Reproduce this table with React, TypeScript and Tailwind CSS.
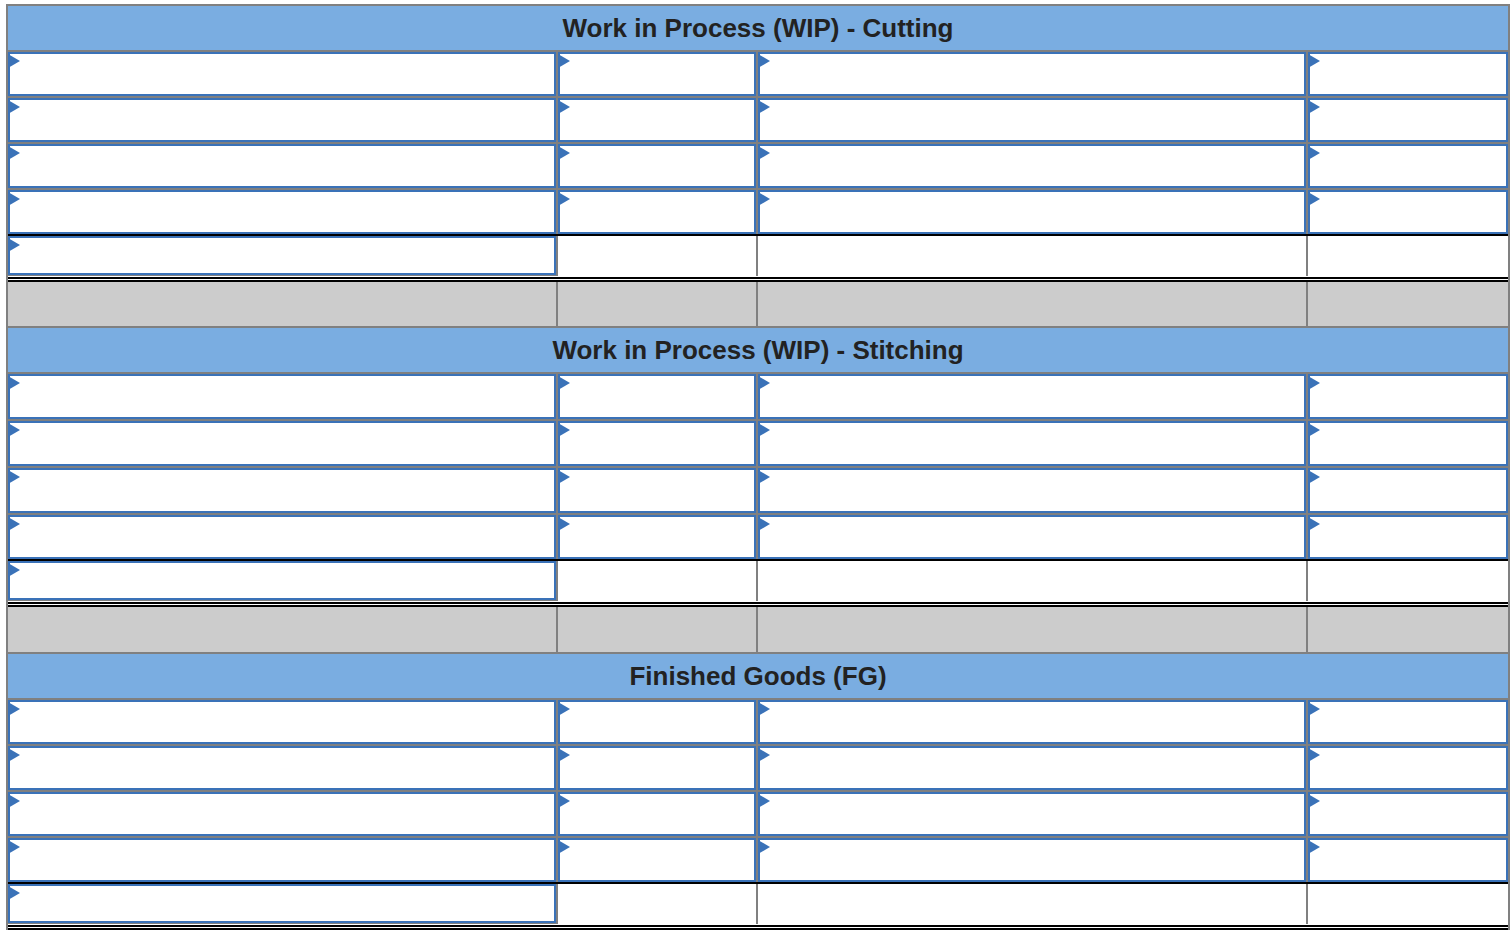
import React from "react";

const COLS = "grid grid-cols-[548px_198px_548px_1fr] gap-x-[2px] bg-[#808080]";

function InputCell() {
  return (
    <div className="relative h-full border-2 border-[#3a72b8] bg-white">
      <svg
        className="absolute left-[-2px] top-0"
        width="13"
        height="15"
        viewBox="0 0 13 15"
      >
        <polygon points="0,0 12,7 0,14" fill="#3a72b8" />
      </svg>
    </div>
  );
}

function InputRow({ h }: { h: string }) {
  return (
    <div className={`${COLS} ${h}`}>
      <InputCell />
      <InputCell />
      <InputCell />
      <InputCell />
    </div>
  );
}

function Gap() {
  return <div className="h-[2px] bg-[#808080]" />;
}

function Section({
  title,
  heights,
  grayH,
  showGray,
}: {
  title: string;
  heights: string[];
  grayH: string;
  showGray: boolean;
}) {
  return (
    <div className="flex flex-col">
      <div className="flex h-[44px] items-center justify-center bg-[#7aade1] text-[26px] font-bold text-[#222222]">
        {title}
      </div>
      <Gap />
      <InputRow h={heights[0]} />
      <Gap />
      <InputRow h={heights[1]} />
      <Gap />
      <InputRow h={heights[2]} />
      <Gap />
      <InputRow h={heights[3]} />
      <div className="h-[2px] bg-black" />
      <div className={`${COLS} h-[40px]`}>
        <div className="h-[39px] bg-white">
          <InputCell />
        </div>
        <div className="bg-white" />
        <div className="bg-white" />
        <div className="bg-white" />
      </div>
      <div className="flex flex-col bg-white">
        <div className="h-[1px] bg-white" />
        <div className="h-[2px] bg-black" />
        <div className="h-[1px] bg-white" />
        <div className="h-[2px] bg-black" />
      </div>
      {showGray && (
        <>
          <div className={`${COLS} ${grayH}`}>
            <div className="bg-[#cccccc]" />
            <div className="bg-[#cccccc]" />
            <div className="bg-[#cccccc]" />
            <div className="bg-[#cccccc]" />
          </div>
          <Gap />
        </>
      )}
    </div>
  );
}

export default function App() {
  return (
    <div
      className="min-h-screen bg-white pl-[6px] pt-[4px]"
      style={{ fontFamily: '"Liberation Sans", Arial, Helvetica, sans-serif' }}
    >
      <div className="w-[1504px] border-x-2 border-t-2 border-[#808080] bg-white">
        <Section
          title="Work in Process (WIP) - Cutting"
          heights={["h-[44px]", "h-[44px]", "h-[44px]", "h-[44px]"]}
          grayH="h-[44px]"
          showGray
        />
        <Section
          title="Work in Process (WIP) - Stitching"
          heights={["h-[45px]", "h-[45px]", "h-[45px]", "h-[44px]"]}
          grayH="h-[45px]"
          showGray
        />
        <Section
          title="Finished Goods (FG)"
          heights={["h-[44px]", "h-[44px]", "h-[44px]", "h-[44px]"]}
          grayH="h-[44px]"
          showGray={false}
        />
      </div>
    </div>
  );
}
